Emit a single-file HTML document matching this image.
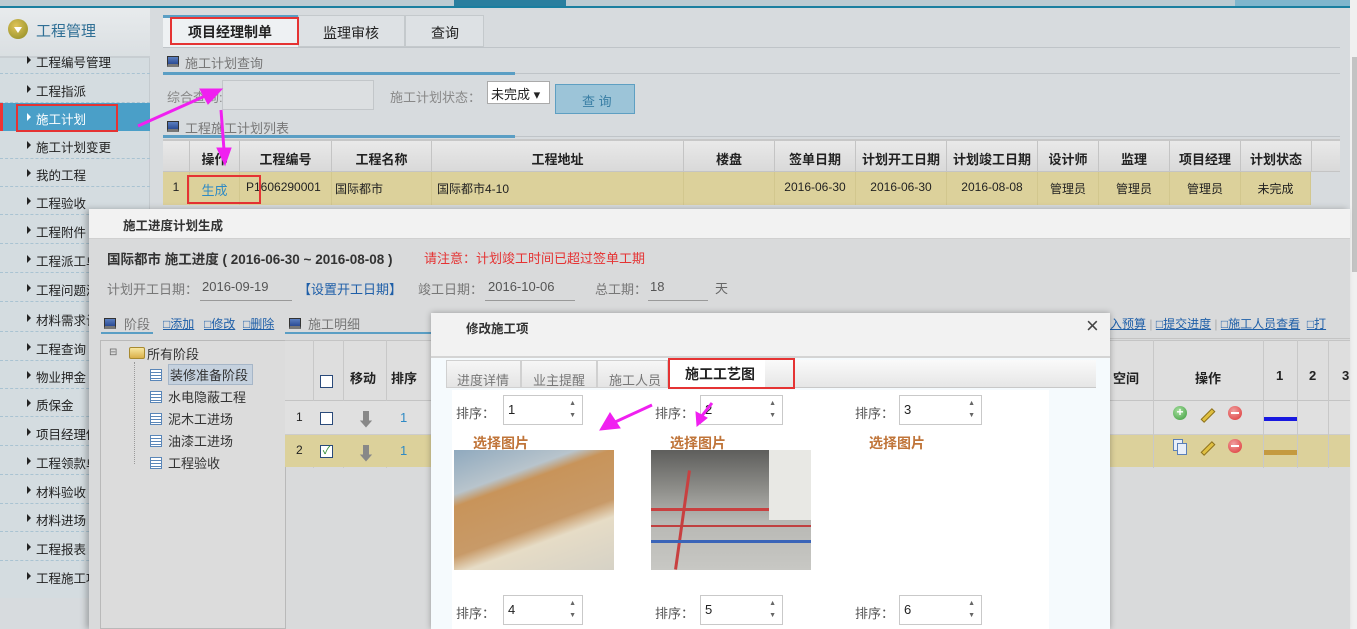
<!DOCTYPE html>
<html><head><meta charset="utf-8">
<style>
*{margin:0;padding:0;box-sizing:border-box}
body{width:1357px;height:629px;overflow:hidden;position:relative;background:#d7dbde;font-family:"Liberation Sans","Noto Sans CJK SC",sans-serif;font-size:13px;color:#222}
.a{position:absolute}
.t{position:absolute;white-space:nowrap}
.side .it{position:absolute;left:0;width:150px;height:28px;border-bottom:1px dashed #a9c3d2;font-size:12.5px;color:#222}
.side .it span{position:absolute;left:36px;top:6px}
.side .it i{position:absolute;left:27px;top:10px;border-left:4px solid #222;border-top:4px solid transparent;border-bottom:4px solid transparent}
.th{position:absolute;top:0;height:100%;border-right:1px solid #c4c4c4;text-align:center;font-weight:bold;font-size:13px}
.cell{position:absolute;top:0;height:100%;border-right:1px solid #d2c78e;text-align:center;font-size:12px}
.ic{display:inline-block;width:12px;height:11px;background:linear-gradient(#5b7fc0,#2a4b94);border:1px solid #333;border-bottom:3px solid #777;vertical-align:-1px}
.lk{color:#1f5fa8;text-decoration:underline;font-size:12px}
.spin{position:absolute;width:80px;height:30px;background:#fff;border:1px solid #c9c9c9;font-size:13px;padding:6px 0 0 4px}
.spin:after{content:"▲\A▼";white-space:pre;position:absolute;right:6px;top:2px;font-size:7px;line-height:12px;color:#666}
.sel{position:absolute;color:#c0753a;font-weight:bold;font-size:14px}
.lbl{position:absolute;color:#555;font-size:13px}
</style></head><body>
<!-- top strip -->
<div class="a" style="left:0;top:0;width:1350px;height:6px;background:#bccbd2"></div>
<div class="a" style="left:454px;top:0;width:112px;height:6px;background:#2a7f9f"></div>
<div class="a" style="left:1235px;top:0;width:115px;height:6px;background:#7fb6cd"></div>
<div class="a" style="left:0;top:6px;width:1350px;height:2px;background:#1a7fa0"></div>
<!-- scrollbar -->
<div class="a" style="left:1350px;top:0;width:7px;height:629px;background:#f0f0f0"></div>
<div class="a" style="left:1352px;top:57px;width:5px;height:215px;background:#c3c3c3"></div>

<!-- sidebar -->
<div class="side a" style="left:0;top:8px;width:150px;height:590px;background:#d4dce0;border-right:1px solid #c4cbcf">
 <div class="a" style="left:0;top:0;width:150px;height:50px;background:linear-gradient(#e8ebed,#dadfe2);border-bottom:2px solid #c8ced2"></div>
 <div class="a" style="left:8px;top:11px;width:20px;height:20px;border-radius:50%;background:radial-gradient(circle at 40% 35%,#e0c45a,#8c8a22)"></div>
 <div class="a" style="left:14px;top:19px;border-top:6px solid #fff;border-left:4px solid transparent;border-right:4px solid transparent"></div>
 <div class="t" style="left:36px;top:12px;font-size:15px;color:#2f6f95">工程管理</div>
</div>
<div class="side">
 <div class="it" style="top:46px"><i></i><span>工程编号管理</span></div>
 <div class="it" style="top:75px"><i></i><span>工程指派</span></div>
 <div class="it" style="top:103px;background:#4a9fc8;border:none"><i style="border-left-color:#fff"></i><span style="color:#fff">施工计划</span></div>
 <div class="it" style="top:131px"><i></i><span>施工计划变更</span></div>
 <div class="it" style="top:159px"><i></i><span>我的工程</span></div>
 <div class="it" style="top:187px"><i></i><span>工程验收</span></div>
 <div class="it" style="top:216px"><i></i><span>工程附件</span></div>
 <div class="it" style="top:245px"><i></i><span>工程派工单</span></div>
 <div class="it" style="top:274px"><i></i><span>工程问题汇</span></div>
 <div class="it" style="top:304px"><i></i><span>材料需求计</span></div>
 <div class="it" style="top:333px"><i></i><span>工程查询</span></div>
 <div class="it" style="top:361px"><i></i><span>物业押金</span></div>
 <div class="it" style="top:389px"><i></i><span>质保金</span></div>
 <div class="it" style="top:418px"><i></i><span>项目经理佣</span></div>
 <div class="it" style="top:447px"><i></i><span>工程领款单</span></div>
 <div class="it" style="top:476px"><i></i><span>材料验收</span></div>
 <div class="it" style="top:504px"><i></i><span>材料进场</span></div>
 <div class="it" style="top:533px"><i></i><span>工程报表</span></div>
 <div class="it" style="top:562px;border:none"><i></i><span>工程施工项</span></div>
</div>
<div class="a" style="left:0;top:103px;width:3px;height:28px;background:#e33"></div>
<div class="a" style="left:16px;top:104px;width:102px;height:28px;border:2px solid #e53333"></div>

<!-- tabs -->
<div class="a" style="left:163px;top:15px;width:135px;height:32px;background:#eef1f3;border-top:3px solid #5a9ec4"></div>
<div class="a" style="left:298px;top:15px;width:107px;height:32px;background:#dde1e4;border:1px solid #c4c9cc"></div>
<div class="a" style="left:405px;top:15px;width:79px;height:32px;background:#dde1e4;border:1px solid #c4c9cc"></div>
<div class="t" style="left:188px;top:22px;font-size:14px;font-weight:bold">项目经理制单</div>
<div class="t" style="left:323px;top:23px;font-size:14px">监理审核</div>
<div class="t" style="left:431px;top:23px;font-size:14px">查询</div>
<div class="a" style="left:170px;top:17px;width:129px;height:28px;border:2px solid #e53333"></div>
<div class="a" style="left:163px;top:47px;width:1177px;height:1px;background:#bfc4c8"></div>

<div class="a" style="left:167px;top:54px"><span class="ic"></span></div>
<div class="t" style="left:185px;top:53px;font-size:13px;color:#777">施工计划查询</div>
<div class="a" style="left:163px;top:72px;width:352px;height:3px;background:#5a9ec4"></div>
<div class="a" style="left:515px;top:73px;width:825px;height:1px;background:#bfc4c8"></div>

<div class="t" style="left:167px;top:87px;color:#888">综合查询:</div>
<div class="a" style="left:222px;top:80px;width:152px;height:30px;background:#dcdfe1;border:1px solid #c2c6c9"></div>
<div class="t" style="left:390px;top:87px;color:#888">施工计划状态：</div>
<div class="a" style="left:487px;top:81px;width:63px;height:23px;background:#fff;border:1px solid #aaa"></div>
<div class="t" style="left:491px;top:84px;font-size:13px">未完成 ▾</div>
<div class="a" style="left:555px;top:84px;width:80px;height:30px;background:#9cc4d8;border:1px solid #5e9fc2"></div>
<div class="t" style="left:582px;top:91px;color:#3a7fa5">查 询</div>

<div class="a" style="left:167px;top:119px"><span class="ic"></span></div>
<div class="t" style="left:185px;top:118px;font-size:13px;color:#777">工程施工计划列表</div>
<div class="a" style="left:163px;top:135px;width:352px;height:3px;background:#5a9ec4"></div>
<div class="a" style="left:515px;top:136px;width:825px;height:1px;background:#bfc4c8"></div>

<!-- table -->
<div class="a" style="left:163px;top:139px;width:1177px;height:33px;background:linear-gradient(#e9e9e9,#d9d9d9);border-top:2px solid #c7c7c7;border-bottom:1px solid #c4c4c4">
 <div class="th" style="left:0;width:27px"></div>
 <div class="th" style="left:27px;width:50px;padding-top:8px">操作</div>
 <div class="th" style="left:77px;width:92px;padding-top:8px">工程编号</div>
 <div class="th" style="left:169px;width:100px;padding-top:8px">工程名称</div>
 <div class="th" style="left:269px;width:252px;padding-top:8px">工程地址</div>
 <div class="th" style="left:521px;width:91px;padding-top:8px">楼盘</div>
 <div class="th" style="left:612px;width:81px;padding-top:8px">签单日期</div>
 <div class="th" style="left:693px;width:91px;padding-top:8px">计划开工日期</div>
 <div class="th" style="left:784px;width:91px;padding-top:8px">计划竣工日期</div>
 <div class="th" style="left:875px;width:61px;padding-top:8px">设计师</div>
 <div class="th" style="left:936px;width:71px;padding-top:8px">监理</div>
 <div class="th" style="left:1007px;width:71px;padding-top:8px">项目经理</div>
 <div class="th" style="left:1078px;width:71px;padding-top:8px">计划状态</div>
</div>
<div class="a" style="left:163px;top:172px;width:1148px;height:33px;background:#dcd19b">
 <div class="cell" style="left:0;width:27px;padding-top:8px">1</div>
 <div class="cell" style="left:27px;width:50px;padding-top:8px;color:#2f8ac4;font-size:13px">生成</div>
 <div class="cell" style="left:77px;width:92px;padding-top:8px;text-align:left;padding-left:6px">P1606290001</div>
 <div class="cell" style="left:169px;width:100px;padding-top:8px;text-align:left;padding-left:3px">国际都市</div>
 <div class="cell" style="left:269px;width:252px;padding-top:8px;text-align:left;padding-left:5px">国际都市4-10</div>
 <div class="cell" style="left:521px;width:91px"></div>
 <div class="cell" style="left:612px;width:81px;padding-top:8px">2016-06-30</div>
 <div class="cell" style="left:693px;width:91px;padding-top:8px">2016-06-30</div>
 <div class="cell" style="left:784px;width:91px;padding-top:8px">2016-08-08</div>
 <div class="cell" style="left:875px;width:61px;padding-top:8px">管理员</div>
 <div class="cell" style="left:936px;width:71px;padding-top:8px">管理员</div>
 <div class="cell" style="left:1007px;width:71px;padding-top:8px">管理员</div>
 <div class="cell" style="left:1078px;width:70px;padding-top:8px">未完成</div>
</div>
<div class="a" style="left:187px;top:175px;width:74px;height:29px;border:2px solid #e53333"></div>

<!-- dialog 1 -->
<div class="a" style="left:89px;top:209px;width:1261px;height:420px;background:#d9dadb;box-shadow:-3px 0 6px rgba(0,0,0,.25)"></div>
<div class="a" style="left:89px;top:209px;width:1261px;height:30px;background:#f2f2f2;border-bottom:1px solid #d0d0d0"></div>
<div class="t" style="left:123px;top:215px;font-size:12.5px;font-weight:bold;color:#333">施工进度计划生成</div>
<div class="t" style="left:107px;top:248px;font-size:13.5px;font-weight:bold;color:#333">国际都市 施工进度 ( 2016-06-30 ~ 2016-08-08 )</div>
<div class="t" style="left:424px;top:248px;font-size:13px;color:#e53333">请注意：计划竣工时间已超过签单工期</div>
<div class="t" style="left:107px;top:279px;color:#777">计划开工日期：</div>
<div class="t" style="left:202px;top:279px;color:#555">2016-09-19</div>
<div class="a" style="left:200px;top:300px;width:92px;height:1px;background:#999"></div>
<div class="t" style="left:298px;top:279px;color:#1f5fa8">【设置开工日期】</div>
<div class="t" style="left:418px;top:279px;color:#777">竣工日期：</div>
<div class="t" style="left:488px;top:279px;color:#555">2016-10-06</div>
<div class="a" style="left:485px;top:300px;width:90px;height:1px;background:#999"></div>
<div class="t" style="left:595px;top:279px;color:#777">总工期：</div>
<div class="t" style="left:650px;top:279px;color:#555">18</div>
<div class="a" style="left:648px;top:300px;width:60px;height:1px;background:#999"></div>
<div class="t" style="left:715px;top:278px;color:#666">天</div>

<div class="a" style="left:104px;top:316px"><span class="ic"></span></div>
<div class="t" style="left:124px;top:314px;color:#777">阶段</div>
<div class="t lk" style="left:163px;top:315px">□添加</div>
<div class="t lk" style="left:204px;top:315px">□修改</div>
<div class="t lk" style="left:243px;top:315px">□删除</div>
<div class="a" style="left:289px;top:316px"><span class="ic"></span></div>
<div class="t" style="left:308px;top:314px;color:#777">施工明细</div>
<div class="a" style="left:101px;top:332px;width:52px;height:2px;background:#5a9ec4"></div>
<div class="a" style="left:285px;top:332px;width:146px;height:2px;background:#5a9ec4"></div>
<div class="t" style="left:1110px;top:315px;font-size:12px"><span class="lk">入预算</span> <span style="color:#aaa">|</span> <span class="lk">□提交进度</span> <span style="color:#aaa">|</span> <span class="lk">□施工人员查看</span>&nbsp; <span class="lk">□打</span></div>
<div class="a" style="left:1110px;top:338px;width:240px;height:1px;background:#c4c4c4"></div>

<!-- tree -->
<div class="a" style="left:100px;top:340px;width:186px;height:289px;border:1px solid #b9b9b9;background:#dcdcdc"></div>
<div class="t" style="left:109px;top:347px;font-size:10px;color:#666">⊟</div>
<div class="a" style="left:129px;top:347px;width:16px;height:12px;background:linear-gradient(#f8e7a0,#d9b04a);border:1px solid #a88a30;border-radius:2px"></div>
<div class="t" style="left:147px;top:344px;color:#333">所有阶段</div>
<div class="a" style="left:134px;top:362px;width:1px;height:102px;border-left:1px dotted #999"></div>
<div class="a" style="left:168px;top:364px;width:85px;height:21px;background:#c5d1de;border:1px solid #a6b6c8"></div>
<div class="t" style="left:150px;top:365px;color:#333;line-height:22px">
<div><span style="display:inline-block;width:12px;height:12px;border:1px solid #5a86b8;background:repeating-linear-gradient(#fff 0 2px,#5a86b8 2px 3px);vertical-align:-1px;margin-right:8px"></span>装修准备阶段</div>
<div><span style="display:inline-block;width:12px;height:12px;border:1px solid #5a86b8;background:repeating-linear-gradient(#fff 0 2px,#5a86b8 2px 3px);vertical-align:-1px;margin-right:6px"></span>水电隐蔽工程</div>
<div><span style="display:inline-block;width:12px;height:12px;border:1px solid #5a86b8;background:repeating-linear-gradient(#fff 0 2px,#5a86b8 2px 3px);vertical-align:-1px;margin-right:6px"></span>泥木工进场</div>
<div><span style="display:inline-block;width:12px;height:12px;border:1px solid #5a86b8;background:repeating-linear-gradient(#fff 0 2px,#5a86b8 2px 3px);vertical-align:-1px;margin-right:6px"></span>油漆工进场</div>
<div><span style="display:inline-block;width:12px;height:12px;border:1px solid #5a86b8;background:repeating-linear-gradient(#fff 0 2px,#5a86b8 2px 3px);vertical-align:-1px;margin-right:6px"></span>工程验收</div>
</div>

<!-- grid left -->
<div class="a" style="left:285px;top:340px;width:1065px;height:61px;background:#dedede;border-top:1px solid #c4c4c4;border-bottom:1px solid #c4c4c4"></div>
<div class="a" style="left:313px;top:340px;width:1px;height:128px;background:#c8c8c8"></div>
<div class="a" style="left:343px;top:340px;width:1px;height:128px;background:#c8c8c8"></div>
<div class="a" style="left:386px;top:340px;width:1px;height:128px;background:#c8c8c8"></div>
<div class="a" style="left:320px;top:375px;width:13px;height:13px;border:1px solid #2a4a7a;background:#fff"></div>
<div class="t" style="left:350px;top:368px;font-weight:bold">移动</div>
<div class="t" style="left:391px;top:368px;font-weight:bold">排序</div>
<div class="a" style="left:285px;top:401px;width:1065px;height:34px;background:#e0e0e0;border-bottom:1px solid #ccc"></div>
<div class="a" style="left:285px;top:435px;width:1065px;height:32px;background:#dcd19b"></div>
<div class="t" style="left:296px;top:410px;font-size:12px">1</div>
<div class="t" style="left:296px;top:443px;font-size:12px">2</div>
<div class="a" style="left:320px;top:412px;width:13px;height:13px;border:1px solid #2a4a7a;background:#fff"></div>
<div class="a" style="left:320px;top:445px;width:13px;height:13px;border:1px solid #2a4a7a;background:#fff;color:#2a8a2a;font-size:11px;line-height:11px;text-align:center">✓</div>
<div class="t" style="left:357px;top:406px;font-size:18px;color:#888">⬇</div>
<div class="t" style="left:357px;top:440px;font-size:18px;color:#888">⬇</div>
<div class="t" style="left:400px;top:410px;color:#2f8ac4">1</div>
<div class="t" style="left:400px;top:443px;color:#2f8ac4">1</div>

<!-- grid right -->
<div class="a" style="left:1153px;top:340px;width:1px;height:128px;background:#c8c8c8"></div>
<div class="a" style="left:1263px;top:340px;width:1px;height:128px;background:#c8c8c8"></div>
<div class="a" style="left:1297px;top:340px;width:1px;height:128px;background:#c8c8c8"></div>
<div class="a" style="left:1328px;top:340px;width:1px;height:128px;background:#c8c8c8"></div>
<div class="t" style="left:1113px;top:368px;font-weight:bold">空间</div>
<div class="t" style="left:1195px;top:368px;font-weight:bold">操作</div>
<div class="t" style="left:1276px;top:368px;font-weight:bold">1</div>
<div class="t" style="left:1309px;top:368px;font-weight:bold">2</div>
<div class="t" style="left:1342px;top:368px;font-weight:bold">3</div>
<div class="a" style="left:1173px;top:406px;width:14px;height:14px;border-radius:50%;background:radial-gradient(circle at 40% 35%,#a8e0a0,#3a9a3a);color:#fff;font-size:12px;line-height:13px;text-align:center;font-weight:bold">+</div>
<div class="a" style="left:1228px;top:406px;width:14px;height:14px;border-radius:50%;background:radial-gradient(circle at 40% 35%,#f0a0a0,#d33);"><div class="a" style="left:3px;top:6px;width:8px;height:2px;background:#fff"></div></div>
<div class="a" style="left:1228px;top:439px;width:14px;height:14px;border-radius:50%;background:radial-gradient(circle at 40% 35%,#f0a0a0,#d33);"><div class="a" style="left:3px;top:6px;width:8px;height:2px;background:#fff"></div></div>
<div class="a" style="left:1200px;top:413px;width:16px;height:5px;background:#e0c040;transform:rotate(-45deg);border:1px solid #8a7020"></div>
<div class="a" style="left:1200px;top:446px;width:16px;height:5px;background:#e0c040;transform:rotate(-45deg);border:1px solid #8a7020"></div>
<div class="a" style="left:1173px;top:439px;width:10px;height:12px;background:#e8eef8;border:1px solid #5a7fb8"></div>
<div class="a" style="left:1177px;top:443px;width:10px;height:12px;background:#e8eef8;border:1px solid #5a7fb8"></div>
<div class="a" style="left:1264px;top:417px;width:33px;height:4px;background:#1818e0"></div>
<div class="a" style="left:1264px;top:450px;width:33px;height:5px;background:#c49a40"></div>

<!-- modal 2 -->
<div class="a" style="left:431px;top:313px;width:679px;height:316px;background:#f5fafd;box-shadow:0 0 6px rgba(0,0,0,.3)"></div>
<div class="a" style="left:431px;top:313px;width:679px;height:45px;background:#f2f2f2;border-bottom:2px solid #d4d4d4"></div>
<div class="t" style="left:466px;top:318px;font-size:12.5px;font-weight:bold;color:#333">修改施工项</div>
<div class="t" style="left:1086px;top:313px;font-size:22px;color:#444;font-weight:300">×</div>
<div class="a" style="left:446px;top:360px;width:650px;height:28px;background:linear-gradient(#fafafa,#e6e6e6);border-bottom:1px solid #c8c8c8"></div>
<div class="a" style="left:446px;top:360px;width:75px;height:28px;border:1px solid #d0d0d0;background:linear-gradient(#f6f6f6,#e4e4e4)"></div>
<div class="a" style="left:521px;top:360px;width:76px;height:28px;border:1px solid #d0d0d0;background:linear-gradient(#f6f6f6,#e4e4e4)"></div>
<div class="a" style="left:597px;top:360px;width:71px;height:28px;border:1px solid #d0d0d0;background:linear-gradient(#f6f6f6,#e4e4e4)"></div>
<div class="a" style="left:668px;top:360px;width:97px;height:29px;background:#fff"></div>
<div class="t" style="left:457px;top:370px;color:#777">进度详情</div>
<div class="t" style="left:533px;top:370px;color:#777">业主提醒</div>
<div class="t" style="left:609px;top:370px;color:#777">施工人员</div>
<div class="t" style="left:685px;top:364px;font-size:14px;font-weight:bold;color:#222">施工工艺图</div>
<div class="a" style="left:668px;top:358px;width:127px;height:31px;border:2px solid #e53333"></div>
<div class="a" style="left:452px;top:390px;width:597px;height:239px;background:#fff"></div>

<div class="lbl" style="left:456px;top:403px">排序：</div><div class="spin" style="left:503px;top:395px">1</div>
<div class="lbl" style="left:655px;top:403px">排序：</div><div class="spin" style="left:700px;top:395px;width:83px">2</div>
<div class="lbl" style="left:855px;top:403px">排序：</div><div class="spin" style="left:899px;top:395px;width:83px">3</div>
<div class="sel" style="left:473px;top:433px">选择图片</div>
<div class="sel" style="left:670px;top:433px">选择图片</div>
<div class="sel" style="left:869px;top:433px">选择图片</div>
<div class="a" style="left:454px;top:450px;width:160px;height:120px;background:linear-gradient(160deg,#8fa9be 0%,#b8c4cc 25%,#c8945a 32%,#c89a68 60%,#e6dcc6 70%,#d6d2c6 100%)"></div>
<div class="a" style="left:651px;top:450px;width:160px;height:120px;background:linear-gradient(#5e5e5c,#8a8a86 30%,#b8b8b4 60%,#c8c8c4);overflow:hidden">
 <div class="a" style="left:0;top:58px;width:160px;height:3px;background:#c84040"></div>
 <div class="a" style="left:30px;top:20px;width:3px;height:100px;background:#c84040;transform:rotate(8deg)"></div>
 <div class="a" style="left:0;top:90px;width:160px;height:3px;background:#3a64b8"></div>
 <div class="a" style="left:0;top:75px;width:160px;height:2px;background:#c04040"></div>
 <div class="a" style="left:118px;top:0;width:42px;height:70px;background:#e8e8e4"></div>
</div>
<div class="lbl" style="left:456px;top:603px">排序：</div><div class="spin" style="left:503px;top:595px">4</div>
<div class="lbl" style="left:655px;top:603px">排序：</div><div class="spin" style="left:700px;top:595px;width:83px">5</div>
<div class="lbl" style="left:855px;top:603px">排序：</div><div class="spin" style="left:899px;top:595px;width:83px">6</div>

<!-- arrows -->
<svg class="a" style="left:0;top:0" width="1357" height="629">
 <g fill="#f020f0" stroke="#f020f0">
  <line x1="138" y1="126" x2="205" y2="96" stroke-width="3"/>
  <polygon points="222,89 200,89 208,104" />
  <line x1="221" y1="110" x2="224" y2="150" stroke-width="3"/>
  <polygon points="225,165 217,148 231,148"/>
  <line x1="652" y1="405" x2="613" y2="423" stroke-width="3"/>
  <polygon points="600,430 610,413 620,428"/>
  <line x1="712" y1="403" x2="701" y2="417" stroke-width="3"/>
  <polygon points="697,426 696,412 707,418"/>
 </g>
</svg>
</body></html>
